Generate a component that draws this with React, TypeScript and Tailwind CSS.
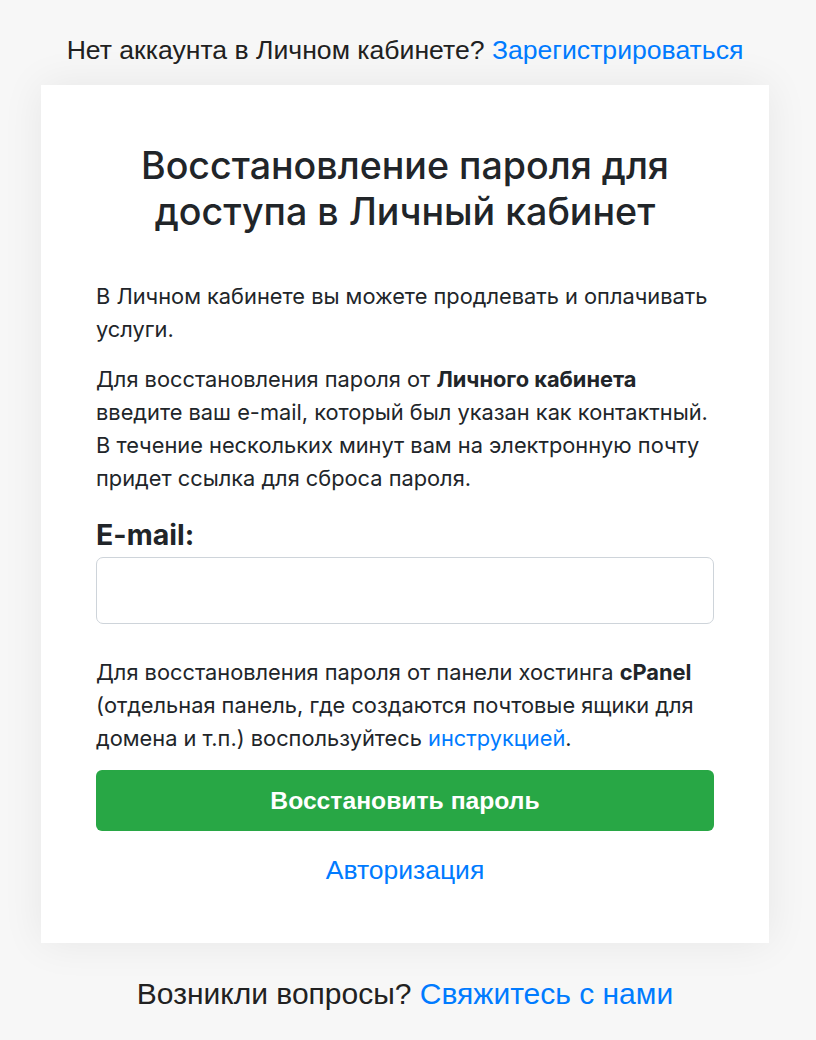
export default function App() {
  return (
    <div className="min-h-screen bg-[#f7f7f7] flex flex-col items-center pt-[34px] pb-10 pr-[6px] font-['Liberation_Sans',Arial,sans-serif]">
      <p className="text-[26.6px] leading-[32px] text-[#212121]">
        Нет аккаунта в Личном кабинете?{' '}
        <a href="#" className="text-[#007bff]">
          Зарегистрироваться
        </a>
      </p>

      <div className="mt-[19px] w-[728px] bg-white px-[55px] pt-[58px] pb-[57px] shadow-[0_0_40px_rgba(0,0,0,0.07)] font-['Inter',sans-serif] text-[#212529]">
        <h1 className="text-center text-[37.6px] leading-[46px] font-medium">
          Восстановление пароля для
          <br />
          доступа в Личный кабинет
        </h1>

        <p className="mt-[45px] leading-[33px] text-[21.8px]">
          В Личном кабинете вы можете продлевать и оплачивать услуги.
        </p>
        <p className="mt-[17px] leading-[33px] text-[21.8px]">
          Для восстановления пароля от <b className="font-bold">Личного кабинета</b> введите ваш e-mail,
          который был указан как контактный. В течение нескольких минут вам на электронную почту придет
          ссылка для сброса пароля.
        </p>

        <label className="mt-[24px] block text-[28.5px] leading-[32px] font-bold">E-mail:</label>
        <input
          type="email"
          className="mt-[6px] block w-full h-[67px] rounded-[7px] border border-[#ced4da] px-4 text-[20px] outline-none"
        />

        <p className="mt-[32px] leading-[33px] text-[21.8px]">
          Для восстановления пароля от панели хостинга <b className="font-bold">cPanel</b> (отдельная
          панель, где создаются почтовые ящики для домена и т.п.) воспользуйтесь{' '}
          <a href="#" className="text-[#007bff]">
            инструкцией
          </a>
          .
        </p>

        <button
          type="button"
          className="mt-[15px] w-full h-[61px] rounded-[6px] bg-[#28a745] text-white text-[24.7px] font-bold font-['Liberation_Sans',Arial,sans-serif]"
        >
          Восстановить пароль
        </button>

        <div className="mt-[23px] text-center text-[26.5px] leading-[32px] font-['Liberation_Sans',Arial,sans-serif]">
          <a href="#" className="text-[#007bff]">
            Авторизация
          </a>
        </div>
      </div>

      <p className="mt-[33px] text-[30px] leading-[36px] text-[#212121]">
        Возникли вопросы?{' '}
        <a href="#" className="text-[#007bff]">
          Свяжитесь с нами
        </a>
      </p>
    </div>
  );
}
